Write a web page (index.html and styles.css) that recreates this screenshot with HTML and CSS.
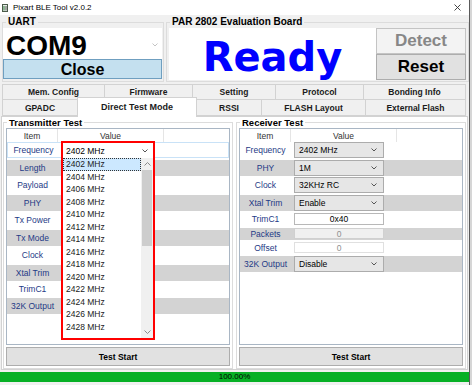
FILE: index.html
```html
<!DOCTYPE html>
<html lang="en">
<head>
  <meta charset="UTF-8" />
  <title>Pixart BLE Tool v2.0.2</title>
  <link rel="stylesheet" href="styles.css">
</head>
<body>

<div class="window">

  <!-- title bar -->
  <div class="titlebar">
    <svg class="app-icon" width="6" height="8" viewBox="0 0 6 8">
      <rect x="0.5" y="0.5" width="5" height="7" fill="#e8efe8" stroke="#4b5b4b" />
      <rect x="1.5" y="2" width="1" height="4.5" fill="#2f7a3a" />
      <rect x="3.5" y="2" width="1" height="4.5" fill="#5a5a5a" />
    </svg>
    <span class="title">Pixart BLE Tool v2.0.2</span>
    <svg class="x-icon" width="7" height="7" viewBox="0 0 7 7">
      <path d="M0.5 0.5 L6.5 6.5 M6.5 0.5 L0.5 6.5" stroke="#333" stroke-width="0.9" />
    </svg>
  </div>

  <!-- UART + board status -->
  <div class="top">
    <fieldset class="group uart">
      <legend>UART</legend>
      <div class="com-box">
        <span>COM9</span>
        <svg class="com-arrow" width="6" height="4" viewBox="0 0 6 4"><path d="M0.5 0.5 L3 3 L5.5 0.5" fill="none" stroke="#c4c4c4" /></svg>
      </div>
      <div class="btn close-btn">Close</div>
    </fieldset>

    <fieldset class="group board">
      <legend>PAR 2802 Evaluation Board</legend>
      <div class="board-row">
        <div class="ready">Ready</div>
        <div class="board-btns">
          <div class="btn detect">Detect</div>
          <div class="btn reset">Reset</div>
        </div>
      </div>
    </fieldset>
  </div>

  <!-- tabs -->
  <div class="tabs">
    <div class="tab-row">
      <div class="tab t-mem">Mem. Config</div>
      <div class="tab t-fw">Firmware</div>
      <div class="tab t-set">Setting</div>
      <div class="tab t-proto">Protocol</div>
      <div class="tab t-bond">Bonding Info</div>
    </div>
    <div class="tab-row second">
      <div class="tab t-adc">GPADC</div>
      <div class="tab t-dtm active">Direct Test Mode</div>
      <div class="tab t-rssi">RSSI</div>
      <div class="tab t-flash">FLASH Layout</div>
      <div class="tab t-ext">External Flash</div>
    </div>
  </div>

  <div class="tab-page">

    <!-- Transmitter -->
    <fieldset class="group test">
      <legend>Transmitter Test</legend>
      <div class="list">
        <div class="list-head">
          <div class="h-item">Item</div>
          <div class="h-value">Value</div>
        </div>
        <div class="rows">
          <div class="row sel"><div class="c-item">Frequency</div></div>
          <div class="row gray"><div class="c-item">Length</div></div>
          <div class="row"><div class="c-item">Payload</div></div>
          <div class="row gray"><div class="c-item">PHY</div></div>
          <div class="row"><div class="c-item">Tx Power</div></div>
          <div class="row gray"><div class="c-item">Tx Mode</div></div>
          <div class="row"><div class="c-item">Clock</div></div>
          <div class="row gray"><div class="c-item">Xtal Trim</div></div>
          <div class="row short"><div class="c-item">TrimC1</div></div>
          <div class="row gray"><div class="c-item">32K Output</div></div>
        </div>

        <!-- opened frequency list -->
        <div class="dropdown">
          <div class="dd-combo">
            <span>2402 MHz</span>
            <svg class="arrow" width="6" height="4" viewBox="0 0 6 4"><path d="M0.5 0.5 L3 3 L5.5 0.5" fill="none" stroke="#555" /></svg>
          </div>
          <div class="dd-body">
            <div class="dd-items">
              <div class="dd-item hl">2402 MHz</div>
              <div class="dd-item">2404 MHz</div>
              <div class="dd-item">2406 MHz</div>
              <div class="dd-item">2408 MHz</div>
              <div class="dd-item">2410 MHz</div>
              <div class="dd-item">2412 MHz</div>
              <div class="dd-item">2414 MHz</div>
              <div class="dd-item">2416 MHz</div>
              <div class="dd-item">2418 MHz</div>
              <div class="dd-item">2420 MHz</div>
              <div class="dd-item">2422 MHz</div>
              <div class="dd-item">2424 MHz</div>
              <div class="dd-item">2426 MHz</div>
              <div class="dd-item">2428 MHz</div>
            </div>
            <div class="scrollbar">
              <div class="sb-btn"><svg width="7" height="4" viewBox="0 0 7 4"><path d="M0.5 3.5 L3.5 0.5 L6.5 3.5" fill="none" stroke="#8a8a8a" /></svg></div>
              <div class="sb-track"><div class="sb-thumb"></div></div>
              <div class="sb-btn"><svg width="7" height="4" viewBox="0 0 7 4"><path d="M0.5 0.5 L3.5 3.5 L6.5 0.5" fill="none" stroke="#8a8a8a" /></svg></div>
            </div>
          </div>
        </div>
      </div>
      <div class="btn test-btn">Test Start</div>
    </fieldset>

    <!-- Receiver -->
    <fieldset class="group test">
      <legend>Receiver Test</legend>
      <div class="list">
        <div class="list-head">
          <div class="h-item">Item</div>
          <div class="h-value">Value</div>
        </div>
        <div class="rows">
          <div class="row">
            <div class="c-item">Frequency</div>
            <div class="c-value"><div class="combo">2402 MHz<svg class="arrow" width="6" height="4" viewBox="0 0 6 4"><path d="M0.5 0.5 L3 3 L5.5 0.5" fill="none" stroke="#555" /></svg></div></div>
          </div>
          <div class="row gray">
            <div class="c-item">PHY</div>
            <div class="c-value"><div class="combo">1M<svg class="arrow" width="6" height="4" viewBox="0 0 6 4"><path d="M0.5 0.5 L3 3 L5.5 0.5" fill="none" stroke="#555" /></svg></div></div>
          </div>
          <div class="row">
            <div class="c-item">Clock</div>
            <div class="c-value"><div class="combo">32KHz RC<svg class="arrow" width="6" height="4" viewBox="0 0 6 4"><path d="M0.5 0.5 L3 3 L5.5 0.5" fill="none" stroke="#555" /></svg></div></div>
          </div>
          <div class="row gray">
            <div class="c-item">Xtal Trim</div>
            <div class="c-value"><div class="combo">Enable<svg class="arrow" width="6" height="4" viewBox="0 0 6 4"><path d="M0.5 0.5 L3 3 L5.5 0.5" fill="none" stroke="#555" /></svg></div></div>
          </div>
          <div class="row short">
            <div class="c-item">TrimC1</div>
            <div class="c-value"><div class="textbox">0x40</div></div>
          </div>
          <div class="row gray tiny">
            <div class="c-item">Packets</div>
            <div class="c-value"><div class="textbox disabled">0</div></div>
          </div>
          <div class="row small">
            <div class="c-item">Offset</div>
            <div class="c-value"><div class="textbox readonly">0</div></div>
          </div>
          <div class="row gray">
            <div class="c-item">32K Output</div>
            <div class="c-value"><div class="combo">Disable<svg class="arrow" width="6" height="4" viewBox="0 0 6 4"><path d="M0.5 0.5 L3 3 L5.5 0.5" fill="none" stroke="#555" /></svg></div></div>
          </div>
        </div>
      </div>
      <div class="btn test-btn">Test Start</div>
    </fieldset>

  </div>

  <div class="progress">100.00%</div>
</div>

</body>
</html>
```

FILE: styles.css
```css
* {
  box-sizing: border-box;
  margin: 0;
  padding: 0;
}

body {
  width: 472px;
  height: 385px;
  overflow: hidden;
  background-color: #d6d6d6;
  font-family: "Liberation Sans", Arial, sans-serif;
  font-size: 8.5px;
  color: #000;
}

.window {
  width: 470px;
  height: 385px;
  background-color: #f0f0f0;
  border-right: 1px solid #5a5a5a;
}

/* TITLE BAR */
.titlebar {
  height: 15px;
  background-color: #fff;
  display: flex;
  align-items: center;
  padding-left: 2px;
}

.title {
  margin-left: 5px;
  font-size: 8px;
}

.x-icon {
  margin-left: auto;
  margin-right: 8px;
}

/* GROUP BOXES */
.group {
  border: 1px solid #dcdcdc;
}

.group legend {
  font-weight: bold;
  font-size: 10px;
  line-height: 12px;
  padding: 0 2px;
  margin-left: 1px;
}

.top {
  display: flex;
  gap: 2px;
  margin-top: 1px;
  padding-left: 2px;
}

.uart {
  width: 162px;
  padding: 0 1px 1px 0;
}

.uart legend {
  margin-left: 3px;
}

.com-box {
  height: 31px;
  background-color: #fff;
  display: flex;
  padding: 5px 0 0 3px;
  font-weight: bold;
  font-size: 28px;
  line-height: 26px;
}

.com-arrow {
  margin: 10px 4px 0 auto;
}

.btn {
  display: flex;
  align-items: center;
  justify-content: center;
  font-weight: bold;
}

.close-btn {
  height: 20px;
  background-color: #c4e0ef;
  border: 1px solid #6f9fc0;
  font-size: 16px;
  padding-top: 1px;
}

.board {
  width: 303px;
  padding: 0 1px 1px 2px;
}

.board-row {
  display: flex;
  height: 52px;
}

.ready {
  width: 207px;
  background-color: #fff;
  display: flex;
  align-items: center;
  justify-content: center;
  padding-top: 6px;
  font-family: "DejaVu Sans", sans-serif;
  font-weight: bold;
  font-size: 40px;
  color: #0000ff;
}

.board-btns {
  width: 90px;
  display: flex;
  flex-direction: column;
}

.detect,
.reset {
  height: 26px;
  font-size: 17px;
}

.detect {
  background-color: #f3f3f3;
  border: 1px solid #c4c4c4;
  color: #878787;
}

.reset {
  background-color: #e1e1e1;
  border: 1px solid #adadad;
}

/* TABS */
.tabs {
  margin-top: 2px;
  padding-left: 2px;
}

.tab-row {
  display: flex;
  height: 15px;
}

.tab-row.second {
  height: 17px;
}

.tab {
  display: flex;
  align-items: center;
  justify-content: center;
  background-color: #f0f0f0;
  border: 1px solid #d2d2d2;
  border-left: none;
  font-weight: bold;
  font-size: 8.5px;
  color: #1b1b1b;
}

.tab-row .tab:first-child {
  border-left: 1px solid #d2d2d2;
}

.tab-row:first-child .tab {
  border-bottom: none;
}

.tab.active {
  background-color: #fff;
  height: 20px;
  margin-top: -2px;
  border-bottom: none;
  border-left: 1px solid #d2d2d2;
  margin-left: -1px;
  padding-bottom: 1px;
  font-size: 9px;
}

.t-mem   { width: 103px; }
.t-fw    { width: 88px; }
.t-set   { width: 83px; }
.t-proto { width: 88px; }
.t-bond  { width: 102px; }
.t-adc   { width: 76px; }
.t-dtm   { width: 120px; }
.t-rssi  { width: 65px; }
.t-flash { width: 104px; }
.t-ext   { width: 100px; }

/* TAB PAGE */
.tab-page {
  height: 254px;
  width: 467px;
  margin-left: 1px;
  border: 1px solid #d2d2d2;
  background-color: #fff;
  display: flex;
  gap: 3px;
  padding-left: 1px;
}

.test {
  width: 230px;
  padding: 0 2px 1px 2px;
}

.test legend {
  font-size: 9.5px;
  line-height: 11px;
}

.list {
  position: relative;
  height: 217px;
  border: 1px solid #a9b6c4;
  background-color: #fff;
}

.list-head {
  display: flex;
  height: 13px;
  color: #333;
}

.h-item,
.h-value {
  display: flex;
  align-items: center;
  justify-content: center;
  border-right: 1px solid #e5e5e5;
}

.h-item  { width: 51px; }
.h-value { width: 106px; }

.rows {
  display: flex;
  flex-direction: column;
  gap: 1.5px;
}

.row {
  display: flex;
  align-items: center;
  height: 16px;
}

.row.short { height: 14px; }
.row.tiny  { height: 12px; }
.row.small { height: 13.5px; }

.row.gray {
  background-color: #d3d3d3;
}

.row.sel {
  border: 1px solid #c9e2f7;
}

.c-item {
  width: 51px;
  text-align: center;
  color: #1e3a86;
}

.c-value {
  width: 106px;
  height: 100%;
  padding-left: 3px;
  display: flex;
  align-items: center;
}

.combo {
  width: 90px;
  height: 16px;
  display: flex;
  align-items: center;
  padding-left: 4px;
  background-color: #e6e6e6;
  border: 1px solid #acacac;
}

.arrow {
  margin-left: auto;
  margin-right: 6px;
}

.textbox {
  width: 90px;
  height: 12px;
  display: flex;
  align-items: center;
  justify-content: center;
  background-color: #fff;
  border: 1px solid #b8b8b8;
}

.textbox.disabled {
  height: 11px;
  background-color: #f0f0f0;
  border-color: #d0d0d0;
  color: #8f8f8f;
}

.textbox.readonly {
  height: 11px;
  border-color: #e0e0e0;
  color: #8f8f8f;
}

/* OPEN DROPDOWN */
.dropdown {
  position: absolute;
  left: 54px;
  top: 12px;
  width: 94px;
  height: 199px;
  border: 2px solid #ff0000;
  background-color: #fff;
  z-index: 2;
}

.dd-combo {
  height: 15px;
  display: flex;
  align-items: center;
  padding-left: 3px;
}

.dd-combo .arrow {
  margin-right: 5px;
}

.dd-body {
  display: flex;
  height: 180px;
}

.dd-items {
  width: 78px;
}

.dd-item {
  height: 12.5px;
  line-height: 12.5px;
  padding-left: 3px;
  color: #1a1a1a;
}

.dd-item.hl {
  background-color: #cce8ff;
  outline: 1px dotted #333;
  outline-offset: -1px;
}

.scrollbar {
  width: 12px;
  display: flex;
  flex-direction: column;
  background-color: #f0f0f0;
}

.sb-btn {
  height: 12px;
  display: flex;
  align-items: center;
  justify-content: center;
}

.sb-track {
  flex: 1;
  padding: 0 1px;
}

.sb-thumb {
  height: 76px;
  background-color: #cdcdcd;
}

.test-btn {
  margin-top: 2px;
  height: 19px;
  background-color: #e1e1e1;
  border: 1px solid #adadad;
}

/* STATUS */
.progress {
  margin-top: 2px;
  height: 10px;
  background-color: #06b025;
  border-bottom: 0;
  text-align: center;
  font-size: 8px;
  line-height: 10px;
}
```
